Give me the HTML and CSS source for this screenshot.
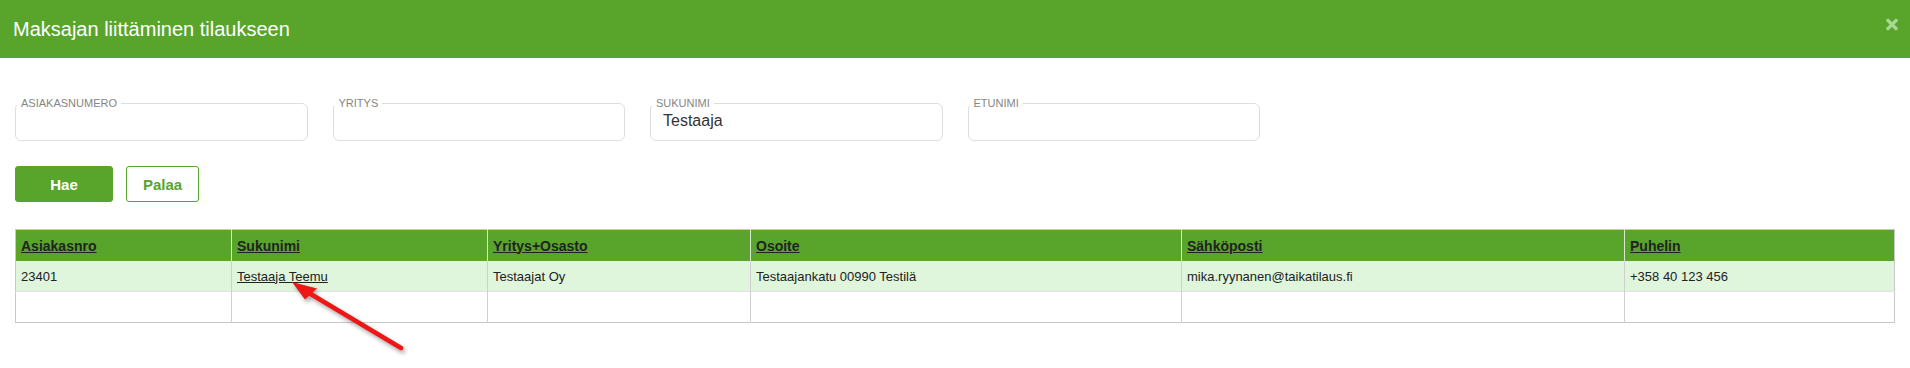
FILE: index.html
```html
<!DOCTYPE html>
<html lang="fi">
<head>
    <meta charset="UTF-8">
    <title>Maksajan liittäminen tilaukseen</title>
    <link rel="stylesheet" href="styles.css">
</head>
<body>
    <div class="modal-header">
        <h1>Maksajan liittäminen tilaukseen</h1>
        <span class="close">
            <svg width="12" height="13" viewBox="0 0 12 13">
                <path d="M2 2.5 L10 10.5 M10 2.5 L2 10.5" stroke="currentColor" stroke-width="3.2" stroke-linecap="square"/>
            </svg>
        </span>
    </div>

    <div class="modal-body">
        <!-- hakukentät -->
        <div class="filters">
            <fieldset class="field">
                <legend>ASIAKASNUMERO</legend>
                <input type="text" value="">
            </fieldset>
            <fieldset class="field">
                <legend>YRITYS</legend>
                <input type="text" value="">
            </fieldset>
            <fieldset class="field">
                <legend>SUKUNIMI</legend>
                <input type="text" value="Testaaja">
            </fieldset>
            <fieldset class="field">
                <legend>ETUNIMI</legend>
                <input type="text" value="">
            </fieldset>
        </div>

        <div class="actions">
            <button class="btn btn-primary">Hae</button>
            <button class="btn btn-outline">Palaa</button>
        </div>

        <!-- hakutulokset -->
        <div class="results">
            <table>
                <colgroup>
                    <col style="width:216px">
                    <col style="width:256px">
                    <col style="width:263px">
                    <col style="width:431px">
                    <col style="width:443px">
                    <col>
                </colgroup>
                <thead>
                    <tr>
                        <th><a href="#">Asiakasnro</a></th>
                        <th><a href="#">Sukunimi</a></th>
                        <th><a href="#">Yritys+Osasto</a></th>
                        <th><a href="#">Osoite</a></th>
                        <th><a href="#">Sähköposti</a></th>
                        <th><a href="#">Puhelin</a></th>
                    </tr>
                </thead>
                <tbody>
                    <tr class="hit">
                        <td>23401</td>
                        <td><a href="#">Testaaja Teemu</a></td>
                        <td>Testaajat Oy</td>
                        <td>Testaajankatu 00990 Testilä</td>
                        <td>mika.ryynanen@taikatilaus.fi</td>
                        <td>+358 40 123 456</td>
                    </tr>
                    <tr>
                        <td></td><td></td><td></td><td></td><td></td><td></td>
                    </tr>
                </tbody>
            </table>

            <!-- nuoli kuvakaappauksen päällä -->
            <svg class="pointer" width="130" height="85" viewBox="0 0 130 85">
                <line x1="24" y1="18" x2="116" y2="73" stroke="#f01616" stroke-width="4.5" stroke-linecap="round"/>
                <polygon points="7,7 20,24.5 32,13.5" fill="#f01616"/>
            </svg>
        </div>
    </div>
</body>
</html>
```

FILE: styles.css
```css
html, body {
    min-height: 100%;
}
body {
    margin: 0;
    font-family: "Liberation Sans", Arial, sans-serif;
    color: #222;
    background: #fff;
}
.modal-header {
    display: flex;
    justify-content: space-between;
    align-items: center;
    height: 58px;
    background-color: #59a52c;
    padding: 0 12px 0 13px;
}
.modal-header h1 {
    margin: 0;
    font-size: 20px;
    font-weight: normal;
    color: #fff;
}
.close {
    display: flex;
    color: #aad892;
    margin-top: -10px;
}
.modal-body {
    padding: 39px 15px 60px 15px;
}
.filters {
    display: grid;
    grid-template-columns: repeat(4, 292.5px);
    gap: 25px;
}
.field {
    margin: 0;
    min-width: 0;
    padding: 0 12px;
    border: 1px solid #dedede;
    border-radius: 6px;
}
.field legend {
    margin-left: -11px;
    padding: 0 4px;
    font-size: 11px;
    line-height: 12px;
    color: #858585;
}
.field input {
    display: block;
    box-sizing: border-box;
    width: 100%;
    height: 31px;
    padding: 0 0 7px 0;
    border: none;
    outline: none;
    font-family: "Liberation Sans", Arial, sans-serif;
    font-size: 16px;
    color: #333;
    background: transparent;
}
.actions {
    display: flex;
    gap: 13px;
    margin-top: 25px;
}
.btn {
    box-sizing: border-box;
    height: 36px;
    border-radius: 3px;
    font-family: "Liberation Sans", Arial, sans-serif;
    font-size: 15px;
    font-weight: bold;
    cursor: pointer;
}
.btn-primary {
    width: 98px;
    border: 1px solid #59a52c;
    background-color: #59a52c;
    color: #fff;
}
.btn-outline {
    width: 73px;
    border: 1px solid #59a52c;
    background-color: #fff;
    color: #59a52c;
}
.results {
    position: relative;
    margin-top: 27px;
}
table {
    width: 100%;
    table-layout: fixed;
    border-collapse: collapse;
    border: 1px solid #c8c8c8;
}
th, td {
    padding: 0 5px;
    text-align: left;
    vertical-align: middle;
    white-space: nowrap;
}
th {
    height: 31px;
    background-color: #59a52c;
    border-left: 1px solid #d8e8cf;
    font-size: 14px;
    font-weight: bold;
}
td {
    height: 30px;
    font-size: 13px;
    border-left: 1px solid #cfcfcf;
    border-top: 1px solid #e2e2e2;
}
th:first-child, td:first-child {
    border-left: none;
}
tr.hit td {
    background-color: #dff5dc;
    border-top: none;
}
th a, td a {
    color: #222;
    text-decoration: underline;
}
.pointer {
    position: absolute;
    left: 270px;
    top: 46px;
    pointer-events: none;
    filter: drop-shadow(2px 3px 2px rgba(0, 0, 0, 0.35));
}
```
